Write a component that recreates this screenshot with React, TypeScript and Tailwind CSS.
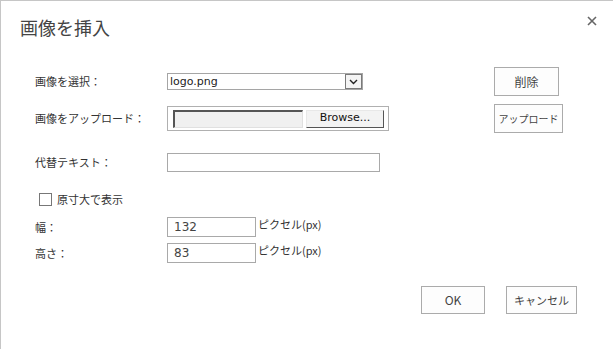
import { ReactNode } from "react";

const jp = "font-['Noto_Sans_CJK_JP',sans-serif]";

function Btn({ w, children, size = "text-[10px]" }: { w: string; children: ReactNode; size?: string }) {
  return (
    <div
      className={`${w} h-full flex items-center justify-center whitespace-nowrap border border-[#ababab] bg-[#fdfdfd] text-[#444] ${size} ${jp}`}
    >
      {children}
    </div>
  );
}

function Label({ children }: { children: ReactNode }) {
  return <div className={`w-[132px] shrink-0 text-[11px] text-[#333] ${jp}`}>{children}</div>;
}

export default function App() {
  return (
    <div className="w-[613px] h-[349px] bg-white border-l border-t border-[#c6c6c6] overflow-hidden">
      {/* Header */}
      <div className="flex justify-between items-start h-[66px] pl-[19px]">
        <h1 className={`pt-[15px] text-[18px] leading-[22px] text-[#444] ${jp}`}>画像を挿入</h1>
        <svg className="mt-[15px] mr-[16px]" width="10" height="10" viewBox="0 0 10 10">
          <path d="M1 1 L9 9 M9 1 L1 9" stroke="#666" strokeWidth="1.6" />
        </svg>
      </div>

      <div className="pl-[34px]">
        {/* Select image */}
        <div className="flex items-center h-[29px]">
          <Label>画像を選択：</Label>
          <div className="w-[196px] h-[17px] border border-[#a5a5a5] flex items-center justify-between">
            <span className="pl-[2px] text-[11px] text-[#222] font-['DejaVu_Sans',sans-serif] leading-none">logo.png</span>
            <div className="w-[17px] h-[15px] border border-[#7a7a7a] bg-[#f4f4f4] flex items-center justify-center">
              <svg width="9" height="6" viewBox="0 0 9 6">
                <path d="M1 1 L4.5 4.5 L8 1" stroke="#222" strokeWidth="1.4" fill="none" />
              </svg>
            </div>
          </div>
          <div className="ml-[131px] h-full">
            <Btn w="w-[65px]" size="text-[12px]">削除</Btn>
          </div>
        </div>

        {/* Upload */}
        <div className="flex items-center h-[29px] mt-[8px]">
          <Label>画像をアップロード：</Label>
          <div className="w-[222px] h-[25px] border border-[#b0b0b0] flex items-center pl-[5px] gap-[3px]">
            <div className="w-[130px] h-[18px] bg-[#f0f0f0] border-t-2 border-l-2 border-[#555] border-b border-r border-b-[#e0e0e0] border-r-[#e0e0e0]" />
            <div className="w-[78px] h-[18px] bg-[#f3f3f3] border border-[#e8e8e8] border-b-[#555] border-r-[#555] flex items-center justify-center text-[11px] text-[#111] font-['DejaVu_Sans',sans-serif]">
              Browse...
            </div>
          </div>
          <div className="ml-[105px] h-full">
            <Btn w="w-[69px]">アップロード</Btn>
          </div>
        </div>

        {/* Alt text */}
        <div className="flex items-center h-[19px] mt-[20px]">
          <Label>代替テキスト：</Label>
          <div className="w-[213px] h-[19px] border border-[#a9a9a9]" />
        </div>

        {/* Checkbox */}
        <div className="flex items-center h-[13px] mt-[21px] pl-[4px]">
          <div className="w-[13px] h-[13px] border border-[#777] bg-white" />
          <span className={`ml-[5px] text-[11px] text-[#333] ${jp}`}>原寸大で表示</span>
        </div>

        {/* Width */}
        <div className="flex items-center h-[20px] mt-[11px]">
          <Label>幅：</Label>
          <div className="w-[89px] h-[20px] border border-[#a9a9a9] flex items-center pl-[6px] text-[12px] text-[#444] font-['DejaVu_Sans',sans-serif]">
            132
          </div>
          <span className={`self-start ml-[2px] text-[11px] leading-[14px] text-[#333] ${jp}`}>ピクセル(px)</span>
        </div>

        {/* Height */}
        <div className="flex items-center h-[20px] mt-[6px]">
          <Label>高さ：</Label>
          <div className="w-[89px] h-[20px] border border-[#a9a9a9] flex items-center pl-[6px] text-[12px] text-[#444] font-['DejaVu_Sans',sans-serif]">
            83
          </div>
          <span className={`self-start ml-[2px] text-[11px] leading-[14px] text-[#333] ${jp}`}>ピクセル(px)</span>
        </div>
      </div>

      {/* Footer */}
      <div className="flex justify-end gap-[21px] h-[28px] mt-[23px] pr-[36px]">
        <Btn w="w-[64px]" size="text-[12px]">OK</Btn>
        <Btn w="w-[71px]" size="text-[11px]">キャンセル</Btn>
      </div>
    </div>
  );
}
